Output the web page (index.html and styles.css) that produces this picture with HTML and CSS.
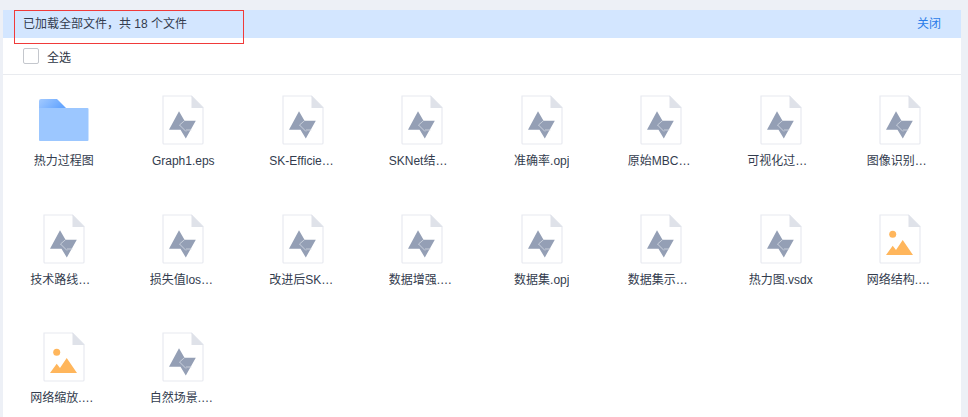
FILE: index.html
```html
<!DOCTYPE html>
<html lang="zh">
<head>
<meta charset="utf-8">
<title>文件</title>
<link rel="stylesheet" href="styles.css">
</head>
<body>
<svg class="defs" width="0" height="0" aria-hidden="true">
  <defs>
    <linearGradient id="tab" x1="0" y1="0" x2="1" y2="0.35">
      <stop offset="0" stop-color="#a3caff"/>
      <stop offset="1" stop-color="#66a6ff"/>
    </linearGradient>
    <symbol id="folder" viewBox="0 0 50 42">
      <path d="M0 2a2 2 0 0 1 2-2h16l9 9H0z" fill="url(#tab)"/>
      <path d="M0 9h48.500a1 1 0 0 1 1 1V41a1 1 0 0 1-1 1H1a1 1 0 0 1-1-1z" fill="#9cc7ff"/>
    </symbol>
    <symbol id="doc" viewBox="0 0 42 50">
      <path d="M1 1h28.500L41 12.500V48a1 1 0 0 1-1 1H2a1 1 0 0 1-1-1z" fill="#fff" stroke="#e8eaf0" stroke-width="1.200"/>
      <path d="M29.500 .5 41.500 13H29.500z" fill="#dfe2e9"/>
      <path d="M17 16.300 22.500 25.700H33.800L23.800 43.500 18.500 34.800H7z" fill="#949fb5"/>
      <path d="M17.500 30 24 36.500M24 35H29.500M22.500 25.700 17.500 30" fill="none" stroke="#d5dae3" stroke-width=".8"/>
    </symbol>
    <symbol id="img" viewBox="0 0 42 50">
      <path d="M1 1h28.500L41 12.500V48a1 1 0 0 1-1 1H2a1 1 0 0 1-1-1z" fill="#fff" stroke="#e8eaf0" stroke-width="1.200"/>
      <path d="M29.500 .5 41.500 13H29.500z" fill="#dfe2e9"/>
      <circle cx="13.700" cy="20.300" r="3.500" fill="#ffb65c"/>
      <path d="M7 41l6.700-9.300 3.300 4.300 6.700-10L34 41z" fill="#ffb65c"/>
    </symbol>
  </defs>
</svg>
<main class="panel">
  <div class="banner">
    <span>已加载全部文件，共 18 个文件</span>
    <a class="close">关闭</a>
  </div>
  <label class="select-all"><span class="check"></span><span>全选</span></label>
  <ul class="grid">
    <li class="item"><svg class="icon folder"><use href="#folder"/></svg><span class="name">热力过程图</span></li>
    <li class="item"><svg class="icon"><use href="#doc"/></svg><span class="name">Graph1.eps</span></li>
    <li class="item"><svg class="icon"><use href="#doc"/></svg><span class="name">SK-EfficientNet.vsdx</span></li>
    <li class="item"><svg class="icon"><use href="#doc"/></svg><span class="name">SKNet结构图.vsdx</span></li>
    <li class="item"><svg class="icon"><use href="#doc"/></svg><span class="name">准确率.opj</span></li>
    <li class="item"><svg class="icon"><use href="#doc"/></svg><span class="name">原始MBConv.vsdx</span></li>
    <li class="item"><svg class="icon"><use href="#doc"/></svg><span class="name">可视化过程图.vsdx</span></li>
    <li class="item"><svg class="icon"><use href="#doc"/></svg><span class="name">图像识别流程.vsdx</span></li>
    <li class="item"><svg class="icon"><use href="#doc"/></svg><span class="name">技术路线图.vsdx</span></li>
    <li class="item"><svg class="icon"><use href="#doc"/></svg><span class="name">损失值loss.opj</span></li>
    <li class="item"><svg class="icon"><use href="#doc"/></svg><span class="name">改进后SKNet.vsdx</span></li>
    <li class="item"><svg class="icon"><use href="#doc"/></svg><span class="name">数据增强.vsdx</span></li>
    <li class="item"><svg class="icon"><use href="#doc"/></svg><span class="name">数据集.opj</span></li>
    <li class="item"><svg class="icon"><use href="#doc"/></svg><span class="name">数据集示例图.vsdx</span></li>
    <li class="item"><svg class="icon"><use href="#doc"/></svg><span class="name">热力图.vsdx</span></li>
    <li class="item"><svg class="icon"><use href="#img"/></svg><span class="name">网络结构.png</span></li>
    <li class="item"><svg class="icon"><use href="#img"/></svg><span class="name">网络缩放.png</span></li>
    <li class="item"><svg class="icon"><use href="#doc"/></svg><span class="name">自然场景.vsdx</span></li>
  </ul>
</main>
<div class="marker"></div>
</body>
</html>
```

FILE: styles.css
```css
* { box-sizing: border-box; }
html, body { margin: 0; height: 100%; overflow: hidden; }
body {
  background: #edf0f6;
  padding: 10px 7px 0 3px;
  font-family: "Liberation Sans", "Noto Sans CJK SC", sans-serif;
  font-size: 12px;
  color: #333c4e;
}
.defs { position: absolute; }
.panel { background: #fff; height: 407px; overflow: hidden; }
.banner {
  height: 28px;
  background: #d3e6ff;
  display: flex;
  align-items: center;
  justify-content: space-between;
  padding: 0 20px 4px;
}
.close { color: #2b7de9; }
.select-all {
  height: 37px;
  display: flex;
  align-items: center;
  gap: 8px;
  padding: 0 20px 0;
  border-bottom: 1px solid #e9ebef;
  color: #2c3444;
}
.check {
  width: 16px;
  height: 16px;
  border: 1px solid #c4c7cd;
  border-radius: 2px;
}
.grid {
  list-style: none;
  margin: 0;
  padding: 20px 0 0 1px;
  display: grid;
  grid-template-columns: repeat(8, 119.5px);
  grid-auto-rows: 118.5px;
}
.item {
  display: flex;
  flex-direction: column;
  align-items: center;
}
.icon { width: 42px; height: 50px; display: block; margin-bottom: 8px; }
.icon.folder { width: 50px; height: 42px; margin: 4px 0 12px; }
.name {
  max-width: 67px;
  line-height: 16px;
  white-space: nowrap;
  overflow: hidden;
  text-overflow: ellipsis;
}
.marker {
  position: absolute;
  left: 14px;
  top: 10px;
  width: 230px;
  height: 34px;
  border: 1px solid #f03a3a;
}
```
